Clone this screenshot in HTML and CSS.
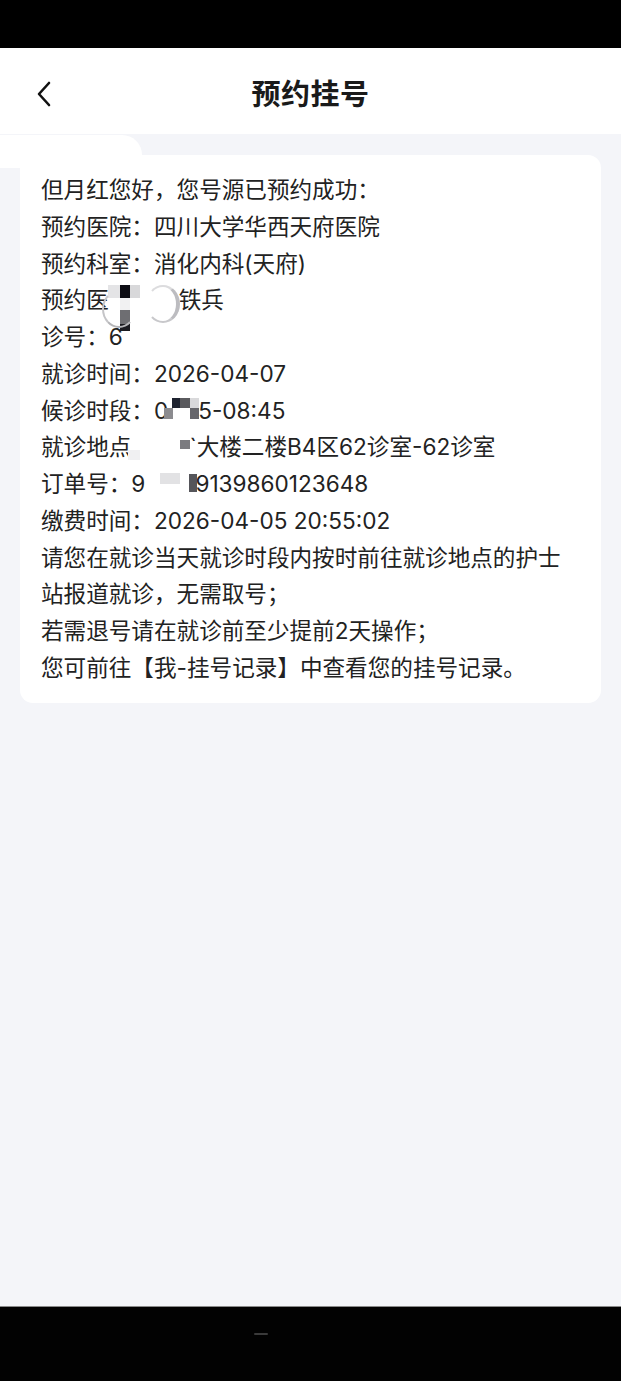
FILE: index.html
```html
<!DOCTYPE html>
<html lang="zh-CN">
<head>
<meta charset="utf-8">
<title>预约挂号</title>
<link rel="stylesheet" href="styles.css">
</head>
<body>
<div class="screen">
  <div class="status-bar"></div>
  <header class="nav">
    <svg class="back" width="20" height="28" viewBox="0 0 20 28">
      <path d="M14 3 L4 14 L14 25" fill="none" stroke="#111" stroke-width="2.6" stroke-linecap="round" stroke-linejoin="round"/>
    </svg>
    <h1 class="title">预约挂号</h1>
  </header>
  <main class="content">
    <div class="blob"></div>
    <section class="card">
      <div class="line">但月红您好，您号源已预约成功：</div>
      <div class="line">预约医院：四川大学华西天府医院</div>
      <div class="line">预约科室：消化内科(天府)</div>
      <div class="line">预约医<span class="gap g1"></span>铁兵</div>
      <div class="line">诊号：6</div>
      <div class="line">就诊时间：2026-04-07</div>
      <div class="line">候诊时段：0<span class="gap g2"></span>5-08:45</div>
      <div class="line">就诊地点<span class="gap g3"></span>`大楼二楼B4区62诊室-62诊室</div>
      <div class="line">订单号：9<span class="gap g4"></span>9139860123648</div>
      <div class="line">缴费时间：2026-04-05 20:55:02</div>
      <div class="line">请您在就诊当天就诊时段内按时前往就诊地点的护士站报道就诊，无需取号；</div>
      <div class="line">若需退号请在就诊前至少提前2天操作；</div>
      <div class="line">您可前往【我-挂号记录】中查看您的挂号记录。</div>

      <div class="mosaic m1a"></div>
      <div class="mosaic m1b"></div>
      <div class="mosaic m1c"></div>
      <div class="mosaic m1d"></div>
      <div class="mosaic m1e"></div>
      <div class="mosaic m1f"></div>
      <div class="arc arc-l"></div>
      <div class="arc arc-r"></div>

      <div class="mosaic m2a"></div>
      <div class="mosaic m2b"></div>
      <div class="mosaic m2c"></div>
      <div class="mosaic m2d"></div>
      <div class="mosaic m2e"></div>

      <div class="mosaic m3a"></div>
      <div class="mosaic m3b"></div>

      <div class="mosaic m4a"></div>
      <div class="mosaic m4b"></div>
    </section>
  </main>
  <footer class="nav-bar"><span class="handle"></span></footer>
</div>
</body>
</html>
```

FILE: styles.css
```css
* { box-sizing: border-box; }
html, body { margin: 0; padding: 0; }
body {
  font-family: Inter, "Noto Sans CJK SC", "Noto Sans", sans-serif;
  background: #000;
}
.screen {
  width: 621px;
  height: 1381px;
  display: flex;
  flex-direction: column;
  background: #f4f5f9;
}
.status-bar {
  height: 48px;
  background: #000;
  flex: none;
}
.nav {
  height: 86px;
  flex: none;
  background: #fff;
  display: flex;
  align-items: center;
  justify-content: center;
  position: relative;
}
.back {
  position: absolute;
  left: 35px;
  top: 32px;
}
.title {
  margin: 0;
  margin-top: 2px;
  font-family: "Noto Sans CJK SC", sans-serif;
  font-size: 29px;
  font-weight: 700;
  color: #1a1a1a;
  letter-spacing: 0.5px;
  line-height: 1;
}
.content {
  flex: 1;
  padding: 21px 20px 0;
  position: relative;
}
.blob {
  position: absolute;
  left: 0;
  top: 1px;
  width: 142px;
  height: 33px;
  background: #fff;
  border-radius: 0 20px 0 0;
}
.card {
  position: relative;
  background: #fff;
  border-radius: 13px;
  padding: 17px 21px 16px;
  color: #222;
  font-size: 22.6px;
  line-height: 36.75px;
}
.gap { display: inline-block; }
.g1 { width: 70px; }
.g2 { width: 30px; }
.g3 { width: 58px; }
.g4 { width: 50px; }

.mosaic { position: absolute; }
/* coordinates relative to card (page x-20, y-155) */
.m1a { left: 88px; top: 130px; width: 12px; height: 13px; background: #e4e4e6; }
.m1b { left: 100px; top: 130px; width: 10px; height: 13px; background: #0d0d14; }
.m1c { left: 110px; top: 130px; width: 10px; height: 13px; background: #d8d8da; }
.m1d { left: 100px; top: 143px; width: 10px; height: 12px; background: #f1f1f2; }
.m1e { left: 100px; top: 155px; width: 10px; height: 14px; background: #6e6e72; }
.m1f { left: 100px; top: 169px; width: 10px; height: 7px; background: #1a1a20; }
.arc {
  position: absolute;
  width: 34px;
  height: 38px;
  border-radius: 50%;
}
.arc-l { left: 82px; top: 135px; border-bottom: 2px solid #b5b5b8; border-left: 2px solid #c5c5c8; border-top: 2px solid transparent; border-right: 2px solid transparent; }
.arc-r { left: 126px; top: 130px; border-right: 4px solid #bcbcc0; border-top: 2px solid #dcdcde; border-bottom: 2px solid #c8c8cb; border-left: 2px solid transparent; }

.m2a { left: 152px; top: 243px; width: 8px; height: 10px; background: #1e2330; }
.m2b { left: 160px; top: 243px; width: 10px; height: 10px; background: #5a5a5e; }
.m2c { left: 170px; top: 243px; width: 9px; height: 10px; background: #d9d9db; }
.m2d { left: 144px; top: 253px; width: 9px; height: 11px; background: #8b8b8f; }
.m2e { left: 170px; top: 253px; width: 9px; height: 11px; background: #66666b; }

.m3a { left: 160px; top: 285px; width: 10px; height: 9px; background: #7b7b7f; }
.m3b { left: 108px; top: 295px; width: 12px; height: 10px; background: #f0f0f2; }

.m4a { left: 140px; top: 318px; width: 20px; height: 11px; background: #e2e2e4; }
.m4b { left: 169px; top: 319px; width: 8px; height: 18px; background: #55555a; }

.nav-bar {
  height: 75px;
  flex: none;
  background: #020202;
  border-top: 1px solid #8a8a8a;
  position: relative;
}
.handle {
  position: absolute;
  left: 254px;
  top: 26px;
  width: 14px;
  height: 2px;
  background: #3a3a3a;
  border-radius: 1px;
}
```
